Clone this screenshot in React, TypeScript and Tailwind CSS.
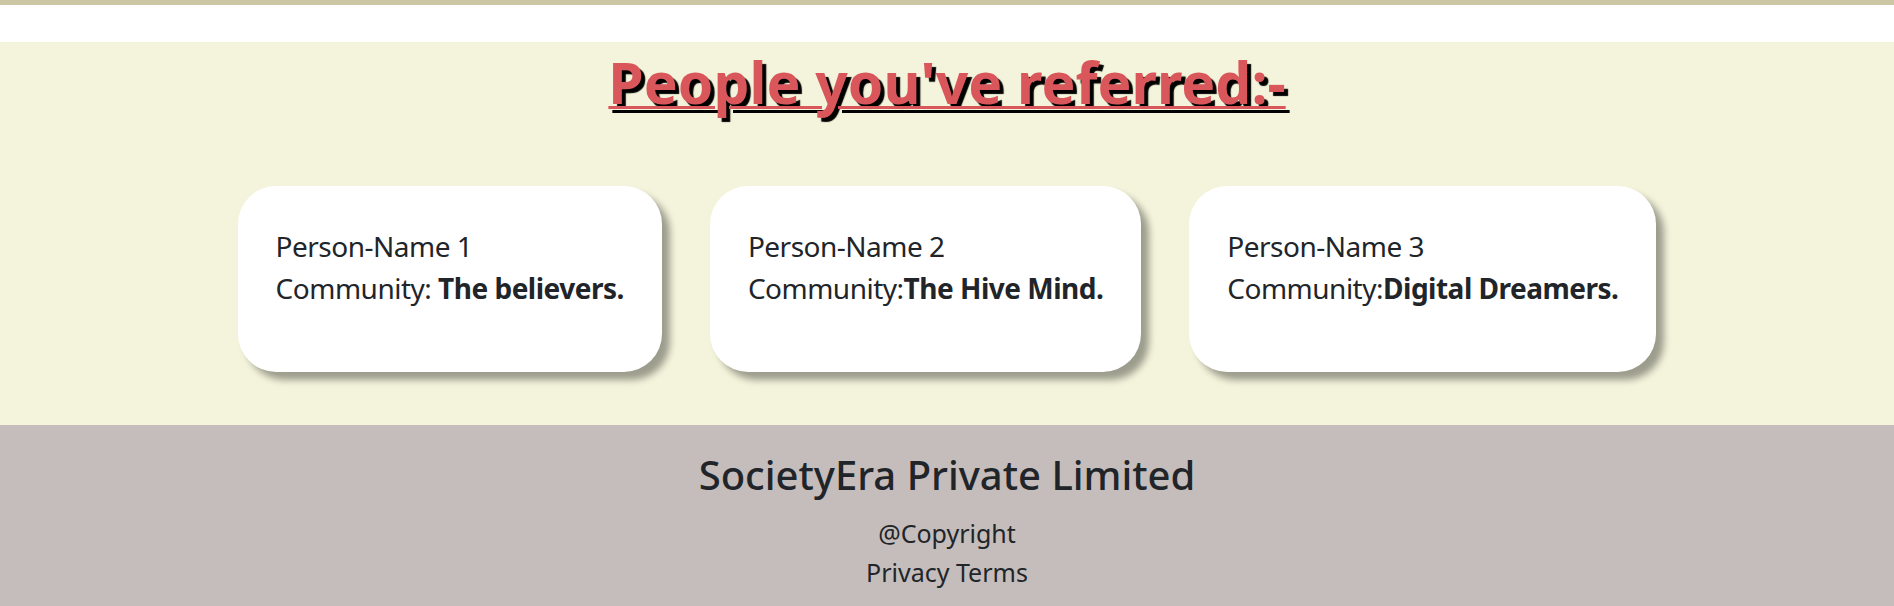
const people = [
  { name: "Person-Name 1", community: "The believers.", sep: ": " },
  { name: "Person-Name 2", community: "The Hive Mind.", sep: ":" },
  { name: "Person-Name 3", community: "Digital Dreamers.", sep: ":" },
];

const ReferralCard = ({ name, community, sep }: { name: string; community: string; sep: string }) => (
  <div className="bg-white rounded-[38px] px-[38px] pt-[39px] pb-[63px] shadow-[8px_8px_7px_rgba(0,0,0,0.36)] text-[28px] leading-[42px] tracking-[-0.5px] text-[#212529] whitespace-nowrap">
    <div>{name}</div>
    <div>
      Community{sep}
      <b className="font-bold">{community}</b>
    </div>
  </div>
);

export default function App() {
  return (
    <div className="min-h-[606px] bg-white font-['Noto_Sans',sans-serif]">
      <div className="h-[5px] bg-[#cdc6a5]"></div>
      <div className="h-[37px] bg-white"></div>

      <section className="bg-[#f4f4dc] pt-[6px] pb-[53px]">
        <h1 className="text-center text-[57px] leading-[68px] font-bold text-[#d9575b] underline decoration-[3px] [text-shadow:4px_4px_1px_#000]">
          People you've referred:-
        </h1>
        <div className="mt-[70px] flex justify-center gap-12">
          {people.map((p) => (
            <ReferralCard key={p.name} {...p} />
          ))}
        </div>
      </section>

      <footer className="bg-[#c5bdbb] pt-[26px] pb-6 text-center text-[#212529]">
        <h2 className="text-[40px] leading-[48px] font-medium">SocietyEra Private Limited</h2>
        <div className="mt-[15px] text-[25px] leading-[39px]">
          <div>@Copyright</div>
          <div>Privacy Terms</div>
        </div>
      </footer>
    </div>
  );
}
